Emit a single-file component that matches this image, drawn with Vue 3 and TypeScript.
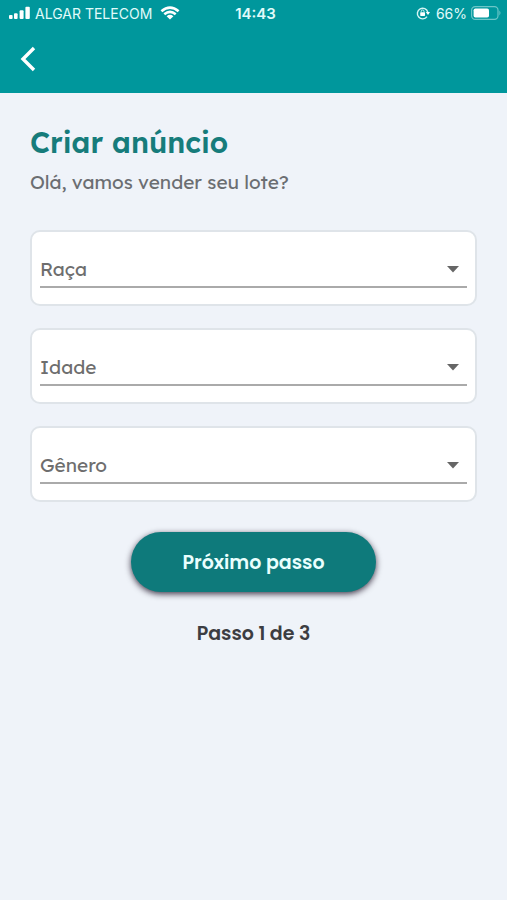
<script setup lang="ts">
import { reactive } from 'vue'

interface Field {
  id: string
  label: string
  value: string
  options: string[]
}

const fields = reactive<Field[]>([
  { id: 'raca', label: 'Raça', value: '', options: ['Nelore', 'Angus', 'Brahman'] },
  { id: 'idade', label: 'Idade', value: '', options: ['0 a 12 meses', '13 a 24 meses', '25 a 36 meses'] },
  { id: 'genero', label: 'Gênero', value: '', options: ['Macho', 'Fêmea'] },
])
</script>

<template>
  <div class="screen">
    <header class="header">
      <div class="status">
        <div class="status-side">
          <svg class="signal" width="22" height="14" viewBox="0 0 22 14" aria-hidden="true">
            <rect x="0" y="9" width="3.6" height="4" rx="1" />
            <rect x="5" y="7.2" width="3.6" height="5.8" rx="1" />
            <rect x="10.6" y="4.2" width="4" height="8.8" rx="1" />
            <rect x="16.4" y="0.8" width="4.4" height="12.2" rx="1" />
          </svg>
          <span class="carrier">ALGAR TELECOM</span>
          <svg class="wifi" width="20" height="14" viewBox="0 0 20 14" aria-hidden="true">
            <path d="M1.4 5.2Q10 -2 18.6 5.2" />
            <path d="M4.3 8.2Q10 3.6 15.7 8.2" />
            <path class="wifi-dot" d="M6.6 10.2Q10 7.4 13.4 10.2L10 13.6Z" />
          </svg>
        </div>
        <span class="clock">14:43</span>
        <div class="status-side status-end">
          <svg class="lock" width="14" height="14" viewBox="0 0 14 14" aria-hidden="true">
            <path class="lock-ring" d="M11 10.6A5.3 5.3 0 1 1 11.8 6.2" />
            <path d="M9.8 6H14L12 9Z" />
            <rect x="4.2" y="6.3" width="4.8" height="3.6" rx="0.6" />
            <path class="lock-shackle" d="M5.2 6.5V5.4a1.4 1.4 0 0 1 2.8 0V6.5" />
          </svg>
          <span class="percent">66%</span>
          <svg class="battery" width="31" height="14" viewBox="0 0 31 14" aria-hidden="true">
            <rect class="battery-case" x="0.6" y="0.6" width="26.4" height="12.8" rx="3.6" />
            <rect x="2.6" y="2.4" width="15.4" height="9.2" rx="1.8" />
            <path class="battery-cap" d="M28.4 4.6Q30.6 7 28.4 9.4Z" />
          </svg>
        </div>
      </div>
      <button class="back" type="button" aria-label="Voltar">
        <svg width="16" height="26" viewBox="0 0 16 26" aria-hidden="true">
          <path d="M14 2L3 13L14 24" />
        </svg>
      </button>
    </header>

    <main class="content">
      <h1 class="title">Criar anúncio</h1>
      <p class="subtitle">Olá, vamos vender seu lote?</p>

      <form class="form" @submit.prevent>
        <div v-for="field in fields" :key="field.id" class="card">
          <div class="field">
            <label v-show="!field.value" class="label" :for="field.id">{{ field.label }}</label>
            <select :id="field.id" v-model="field.value" class="select">
              <option value="" hidden></option>
              <option v-for="option in field.options" :key="option" :value="option">{{ option }}</option>
            </select>
            <svg class="caret" width="12" height="7" viewBox="0 0 12 7" aria-hidden="true">
              <path d="M0 0H12L6 6.5Z" />
            </svg>
          </div>
        </div>
        <button class="next" type="submit">Próximo passo</button>
      </form>

      <p class="step">Passo 1 de 3</p>
    </main>
  </div>
</template>

<style>
body {
  background: #eff3f9;
}
</style>

<style scoped>
.screen {
  min-height: 100vh;
  background: #eff3f9;
  font-family: Lexend, Inter, 'Open Sans', sans-serif;
}

.header {
  background: #00979c;
  color: #e0fbfa;
  padding-bottom: 10px;
}

.status {
  display: grid;
  grid-template-columns: 1fr auto 1fr;
  align-items: center;
  height: 26px;
  padding: 0 5px 0 9px;
  font-family: Inter, 'Liberation Sans', sans-serif;
  font-size: 14px;
}

.status-side {
  display: flex;
  align-items: center;
  gap: 4px;
  white-space: nowrap;
}

.status-end {
  justify-content: flex-end;
}

.signal,
.battery,
.lock {
  fill: #fff;
}

.wifi {
  margin-left: 4px;
  fill: none;
  stroke: #fff;
  stroke-width: 2.6;
}

.wifi-dot {
  fill: #fff;
  stroke: none;
}

.clock {
  font-size: 15px;
  font-weight: 600;
}

.lock-ring,
.lock-shackle {
  fill: none;
  stroke: #d5f5f4;
  stroke-width: 1.4;
}

.lock-shackle {
  stroke-width: 1;
}

.percent {
  margin-left: 2px;
}

.battery-case {
  fill: none;
  stroke: #6cc6c8;
  stroke-width: 1.2;
}

.battery-cap {
  fill: #6cc6c8;
}

.back {
  display: flex;
  align-items: center;
  justify-content: center;
  width: 48px;
  height: 48px;
  margin-top: 9px;
  margin-left: 4px;
  padding: 0;
  border: 0;
  background: none;
  cursor: pointer;
}

.back svg {
  fill: none;
  stroke: #fff;
  stroke-width: 3.4;
}

.content {
  padding: 31px 30px;
}

.title {
  margin: 0;
  color: #167c7b;
  font-size: 29px;
  font-weight: 600;
  line-height: 36px;
}

.subtitle {
  margin: 8px 0 0;
  color: #6b6e72;
  font-size: 19px;
  line-height: 28px;
}

.form {
  display: flex;
  flex-direction: column;
  gap: 22px;
  margin-top: 34px;
}

.card {
  box-sizing: border-box;
  height: 76px;
  padding: 20px 8px 16px;
  border: 2px solid #dfe4e9;
  border-radius: 10px;
  background: #fff;
}

.field {
  display: grid;
  align-items: center;
  height: 36px;
  box-sizing: border-box;
  border-bottom: 2px solid #aaa;
}

.label,
.select,
.caret {
  grid-area: 1 / 1;
}

.label {
  color: #6e6e6e;
  font-size: 19px;
  line-height: 28px;
  pointer-events: none;
  z-index: 1;
}

.select {
  width: 100%;
  height: 34px;
  padding: 0;
  border: 0;
  appearance: none;
  background: none;
  color: #444;
  font: inherit;
  font-size: 19px;
}

.caret {
  justify-self: end;
  margin-right: 8px;
  fill: #666;
  pointer-events: none;
}

.next {
  align-self: center;
  width: 55%;
  height: 60px;
  margin-top: 8px;
  padding: 0;
  border: 0;
  border-radius: 30px;
  background: #0e7a7b;
  box-shadow: 0 2px 6px rgba(20, 10, 30, 0.8);
  color: #e9fffe;
  font-family: Poppins, Inter, sans-serif;
  font-size: 19px;
  font-weight: 600;
  cursor: pointer;
}

.step {
  margin: 28px 0 0;
  color: #3c3d42;
  font-family: Poppins, Inter, sans-serif;
  font-size: 19px;
  font-weight: 600;
  line-height: 28px;
  text-align: center;
}
</style>
